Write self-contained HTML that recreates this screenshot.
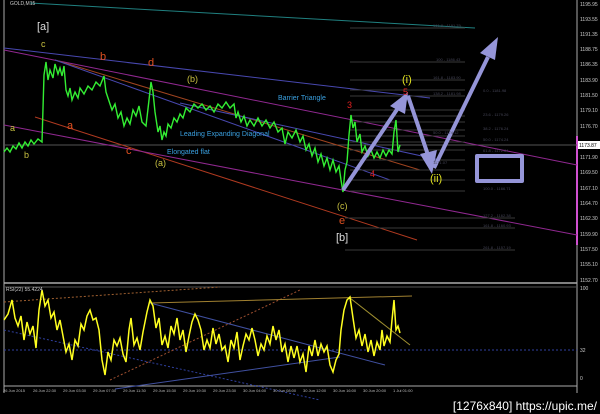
<!DOCTYPE html><html><head><style>body{margin:0;background:#000;width:600px;height:414px;overflow:hidden}svg{display:block}text{font-family:"Liberation Sans",sans-serif}</style></head><body>
<svg width="600" height="414" viewBox="0 0 600 414">
<rect width="600" height="414" fill="#000"/>
<g fill="none" stroke-width="1">
<line x1="4" y1="0" x2="4" y2="393" stroke="#aaa"/>
<line x1="577" y1="0" x2="577" y2="393" stroke="#aaa"/>
<line x1="4" y1="283" x2="577" y2="283" stroke="#aaa" stroke-width="1.5"/>
<line x1="4" y1="386" x2="577" y2="386" stroke="#aaa"/>
<line x1="577" y1="136" x2="577" y2="245" stroke="#d050d0" stroke-width="2"/>
<line x1="4" y1="145" x2="577" y2="145" stroke="#555"/>
<line x1="30" y1="3" x2="475" y2="28" stroke="#208080"/>
<line x1="4" y1="48" x2="430" y2="98" stroke="#4848b0"/>
<line x1="4" y1="50" x2="577" y2="165" stroke="#902890"/>
<line x1="55" y1="60" x2="420" y2="170" stroke="#a04420"/>
<line x1="55" y1="60" x2="390" y2="180" stroke="#4848b0"/>
<line x1="35" y1="117" x2="417" y2="240" stroke="#b03a20"/>
<line x1="4" y1="125" x2="577" y2="235" stroke="#902890"/>
<line x1="180" y1="103" x2="440" y2="160" stroke="#4848b0"/>
<g stroke="#3a3a3a">
<line x1="350" y1="28" x2="465" y2="28"/><line x1="350" y1="62" x2="465" y2="62"/><line x1="350" y1="80" x2="465" y2="80"/>
<line x1="350" y1="90" x2="465" y2="90"/><line x1="350" y1="96" x2="465" y2="96"/><line x1="350" y1="110" x2="465" y2="110"/>
<line x1="350" y1="116" x2="465" y2="116"/><line x1="350" y1="122" x2="465" y2="122"/><line x1="350" y1="130" x2="465" y2="130"/>
<line x1="350" y1="136" x2="465" y2="136"/><line x1="350" y1="142" x2="465" y2="142"/><line x1="350" y1="150" x2="465" y2="150"/>
<line x1="350" y1="160" x2="465" y2="160"/><line x1="350" y1="170" x2="465" y2="170"/><line x1="350" y1="180" x2="465" y2="180"/><line x1="350" y1="191" x2="465" y2="191"/>
<line x1="345" y1="218" x2="515" y2="218"/><line x1="345" y1="228" x2="515" y2="228"/><line x1="345" y1="250" x2="515" y2="250"/>
</g>
<polyline stroke="#33ee33" stroke-width="1.4" points="4,152 7,148 10,152 13,146 16,149 19,143 22,148 25,142 28,146 31,140 34,144 38,139 42,142 44,75 46,62 48,80 50,70 53,78 55,64 58,74 60,68 62,76 64,66 66,90 68,96 70,88 72,100 75,92 78,98 80,88 84,94 88,86 92,90 96,82 100,86 104,76 106,92 108,98 112,110 115,104 118,118 121,112 124,126 127,118 130,124 133,110 136,116 139,106 142,122 146,126 149,100 151,82 153,92 155,112 158,132 160,126 162,140 164,132 166,136 168,124 171,128 174,118 177,122 180,114 183,118 186,108 190,112 194,104 198,108 202,104 206,110 210,106 214,112 218,104 222,108 226,102 230,108 234,104 236,118 238,112 241,122 244,116 247,126 250,120 254,126 258,118 262,126 266,120 270,128 274,122 278,132 282,128 285,144 288,132 292,138 296,130 300,142 303,136 306,150 309,144 312,156 315,148 318,162 321,154 324,166 327,158 330,170 333,160 336,172 339,166 341,180 343,192 345,170 347,162 349,135 351,115 353,128 355,122 357,142 360,134 362,152 365,146 368,156 371,150 374,158 377,152 380,158 383,150 386,156 389,150 392,154 394,132 396,120 398,152 400,145"/>
<g stroke="#9595d8" stroke-width="4" stroke-linejoin="round">
<polyline points="343,190 400,105"/><polyline points="408,96 428,155"/><polyline points="434,168 488,57"/>
<rect x="477" y="156" width="45" height="25" stroke-width="4"/>
</g>
<g fill="#9595d8"><polygon points="408,92 390,106 405,114"/><polygon points="432,174 420,154 437,150"/><polygon points="498,37 480,53 495,60"/></g>
<line x1="4" y1="287" x2="577" y2="287" stroke="#555"/>
<line x1="4" y1="350" x2="577" y2="350" stroke="#3040a0" stroke-dasharray="2,2"/>
<line x1="4" y1="302" x2="220" y2="287" stroke="#a06030" stroke-dasharray="2,2"/>
<line x1="110" y1="380" x2="300" y2="290" stroke="#a05030" stroke-dasharray="2,2"/>
<line x1="4" y1="330" x2="320" y2="400" stroke="#3040a0" stroke-dasharray="2,2"/>
<line x1="150" y1="303" x2="412" y2="296" stroke="#a08030"/>
<line x1="150" y1="303" x2="385" y2="365" stroke="#4050a0"/>
<line x1="115" y1="389" x2="340" y2="357" stroke="#4050a0"/>
<line x1="350" y1="298" x2="410" y2="345" stroke="#a09030"/>
<polyline stroke="#ffff20" stroke-width="1.5" points="4,320 8,314 12,300 15,318 18,326 21,316 24,340 27,322 30,334 33,326 36,348 39,310 42,290 45,306 48,300 51,318 54,312 57,330 60,320 63,336 66,352 69,344 72,360 75,340 78,346 81,324 84,330 87,316 90,310 93,320 96,318 99,330 102,360 105,375 108,352 111,360 114,340 117,346 120,338 123,354 126,362 129,330 131,318 134,345 137,338 140,350 143,332 147,312 150,300 153,306 156,328 159,318 162,345 165,336 168,348 171,326 174,334 177,318 180,340 183,330 186,352 189,336 192,322 195,314 198,320 201,330 204,350 207,340 210,348 213,328 216,344 219,334 222,350 225,346 228,362 231,340 234,348 237,332 240,360 243,346 246,334 249,340 252,328 255,340 258,356 261,344 264,350 267,336 270,344 273,326 276,340 279,330 282,352 285,344 288,362 291,346 294,358 297,346 300,362 303,354 306,372 309,346 312,356 315,340 318,356 321,344 324,352 327,346 330,365 333,372 336,360 339,354 341,330 344,310 347,300 350,297 353,318 356,338 359,330 362,346 365,334 368,352 371,340 374,356 377,342 380,350 382,330 384,346 387,336 390,342 392,320 394,300 396,330 398,326 400,333"/>
</g>
<g font-size="9">
<text x="10" y="131" fill="#c8c040">a</text><text x="24" y="158" fill="#c8c040">b</text>
<text x="37" y="30" fill="#ddd" font-size="11">[a]</text>
<text x="41" y="47" fill="#c8c040">c</text><text x="100" y="60" fill="#e05020" font-size="11">b</text>
<text x="148" y="66" fill="#e05020" font-size="11">d</text><text x="187" y="82" fill="#c8c040">(b)</text>
<text x="67" y="129" fill="#e05020" font-size="11">a</text><text x="126" y="154" fill="#e05020" font-size="11">c</text>
<text x="155" y="166" fill="#c8c040">(a)</text>
<text x="180" y="136" fill="#3aa0e0" font-size="7">Leading Expanding Diagonal</text>
<text x="167" y="154" fill="#3aa0e0" font-size="7">Elongated flat</text>
<text x="278" y="100" fill="#3aa0e0" font-size="7">Barrier Triangle</text>
<text x="347" y="108" fill="#e02020">3</text><text x="370" y="177" fill="#e02020">4</text>
<text x="403" y="95" fill="#e02020">5</text><text x="337" y="209" fill="#c8c040">(c)</text>
<text x="339" y="224" fill="#e05020" font-size="11">e</text><text x="336" y="241" fill="#ddd" font-size="11">[b]</text>
<text x="402" y="83" fill="#e0e020" font-size="11">(i)</text><text x="430" y="182" fill="#e0e020" font-size="11">(ii)</text>
</g>
<g font-size="4" fill="#445">
<text x="433" y="27">161.8 - 1191.79</text><text x="436" y="61">100 - 1186.43</text><text x="433" y="79">161.8 - 1183.90</text><text x="433" y="95">138.2 - 1181.98</text><text x="433" y="134">50.0 - 1174.12</text><text x="433" y="164">1171.07</text><text x="483" y="92">0.0 - 1181.98</text><text x="483" y="116">23.6 - 1179.26</text><text x="483" y="130">38.2 - 1176.24</text><text x="483" y="141">50.0 - 1174.24</text><text x="483" y="152">61.8 - 1172.84</text><text x="483" y="190">100.0 - 1166.71</text><text x="483" y="217">127.2 - 1162.38</text><text x="483" y="227">161.8 - 1160.93</text><text x="483" y="249">261.8 - 1157.19</text>
</g>
<g font-size="5" fill="#ccc">
<text x="580" y="6">1195.95</text><text x="580" y="21">1193.55</text><text x="580" y="36">1191.35</text><text x="580" y="51">1188.75</text><text x="580" y="66">1186.35</text><text x="580" y="82">1183.90</text><text x="580" y="97">1181.50</text><text x="580" y="112">1179.10</text><text x="580" y="128">1176.70</text><text x="580" y="159">1171.90</text><text x="580" y="174">1169.50</text><text x="580" y="190">1167.10</text><text x="580" y="205">1164.70</text><text x="580" y="220">1162.30</text><text x="580" y="236">1159.90</text><text x="580" y="251">1157.50</text><text x="580" y="266">1155.10</text><text x="580" y="282">1152.70</text>
<text x="580" y="290">100</text><text x="580" y="352">32</text><text x="580" y="380">0</text>
<text x="10" y="5">GOLD,M15</text><text x="6" y="291">RSI(22) 55.4224</text>
</g>
<g font-size="4" fill="#bbb">
<text x="3" y="392">26 Jun 2015</text><text x="33" y="392">26 Jun 22:30</text><text x="63" y="392">29 Jun 03:30</text><text x="93" y="392">29 Jun 07:30</text><text x="123" y="392">29 Jun 11:30</text><text x="153" y="392">29 Jun 15:30</text><text x="183" y="392">29 Jun 19:30</text><text x="213" y="392">29 Jun 23:30</text><text x="243" y="392">30 Jun 04:00</text><text x="273" y="392">30 Jun 08:00</text><text x="303" y="392">30 Jun 12:00</text><text x="333" y="392">30 Jun 16:00</text><text x="363" y="392">30 Jun 20:00</text><text x="393" y="392">1 Jul 01:00</text>
</g>
<rect x="578" y="141" width="22" height="8" fill="#fff"/><text x="579" y="147" font-size="5" fill="#000">1173.87</text>
<text x="597" y="410" font-size="12" fill="#fff" text-anchor="end">[1276x840] https://upic.me/</text>
</svg></body></html>
